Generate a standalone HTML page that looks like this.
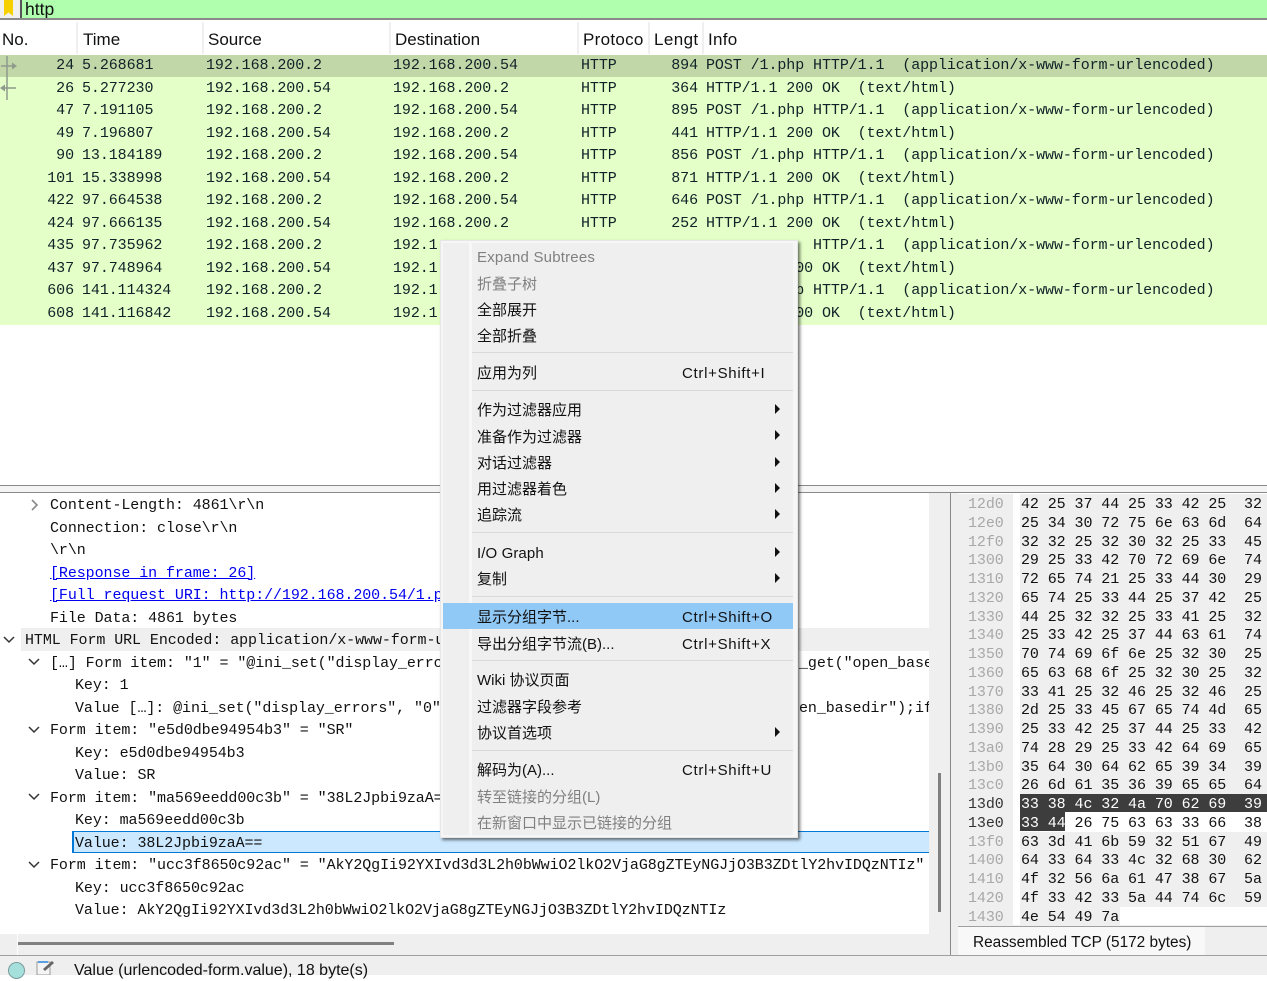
<!DOCTYPE html>
<html><head><meta charset="utf-8"><style>
html,body{margin:0;padding:0;width:1267px;height:975px;overflow:hidden;background:#fff}
*{box-sizing:border-box}
.a{position:absolute}
.m{font-family:"Liberation Mono","DejaVu Sans Mono",monospace;font-size:15px;letter-spacing:-.08px;color:#0f2228;white-space:pre}
.u{font-family:"Liberation Sans","Noto Sans CJK SC",sans-serif;font-size:15px;white-space:pre;color:#111}
#hd span{position:absolute;top:30px;font:17px/20px "Liberation Sans",sans-serif;color:#111;white-space:pre}
.dv{position:absolute;top:22px;width:2px;height:32px;background:#efefef}
.r{position:absolute;left:0;width:1267px;height:23px;background:#e4ffc7;line-height:21px}
.r span{position:absolute;top:0}
.r:nth-child(even) span{top:1px}
.n{left:0;width:74px;text-align:right}.t{left:82px}.s{left:206px}.d{left:393px}.p{left:581px}.l{left:640px;width:58px;text-align:right}.i{left:706px}
.tr{position:absolute;height:22px;line-height:21px;color:#111}
.x{position:absolute;left:968px;width:40px;color:#a8a8a8;line-height:22px}
.h{position:absolute;left:1020px;padding-left:1px;height:19px;line-height:22px;background:#efefef;color:#111;width:247px}
.off{position:absolute;left:958px;top:494px;width:55px;height:431px;background:#efefef}
.mi{position:absolute;left:477px;line-height:26px;height:22px;color:#111}
.g{color:#808080}
.sc{position:absolute;left:682px;line-height:26px;color:#111;letter-spacing:.7px}
.ar{position:absolute;left:775px;width:0;height:0;border-left:5.5px solid #111;border-top:5px solid transparent;border-bottom:5px solid transparent}
.sp{position:absolute;left:472px;width:321px;height:1px;background:#d9d9d9}
</style></head><body>

<!-- filter bar -->
<div class="a" style="left:0;top:0;width:1267px;height:18px;background:#afffaf"></div>
<div class="a" style="left:0;top:0;width:20px;height:18px;background:#f0f0f0"></div>
<svg class="a" style="left:0;top:0" width="20" height="18"><path d="M4 0H13V16L8.5 12.5L4 16Z" fill="#f6d000"/></svg>
<div class="a" style="left:20px;top:0;width:2px;height:18px;background:#555"></div>
<div class="a u" style="left:25px;top:-1px;font-size:17.5px;line-height:20px">http</div>
<div class="a" style="left:0;top:18px;width:1267px;height:2px;background:#8a8a8a"></div>

<!-- header -->
<div id="hd">
<span style="left:2px">No.</span><span style="left:83px">Time</span><span style="left:208px">Source</span><span style="left:395px">Destination</span><span style="left:583px;letter-spacing:.3px">Protoco</span><span style="left:654px;letter-spacing:.4px">Lengt</span><span style="left:708px;letter-spacing:.3px">Info</span>
</div>
<div class="dv" style="left:76px"></div><div class="dv" style="left:202px"></div><div class="dv" style="left:389px"></div><div class="dv" style="left:577px"></div><div class="dv" style="left:648px"></div><div class="dv" style="left:702px"></div>

<!-- packet list -->
<div class="a m" style="left:0;top:0">
<div class="r" style="top:54.5px;background:#c2d7a7"><span class="n">24</span><span class="t">5.268681</span><span class="s">192.168.200.2</span><span class="d">192.168.200.54</span><span class="p">HTTP</span><span class="l">894</span><span class="i">POST /1.php HTTP/1.1  (application/x-www-form-urlencoded)</span></div>
<div class="r" style="top:77px"><span class="n">26</span><span class="t">5.277230</span><span class="s">192.168.200.54</span><span class="d">192.168.200.2</span><span class="p">HTTP</span><span class="l">364</span><span class="i">HTTP/1.1 200 OK  (text/html)</span></div>
<div class="r" style="top:99.5px"><span class="n">47</span><span class="t">7.191105</span><span class="s">192.168.200.2</span><span class="d">192.168.200.54</span><span class="p">HTTP</span><span class="l">895</span><span class="i">POST /1.php HTTP/1.1  (application/x-www-form-urlencoded)</span></div>
<div class="r" style="top:122px"><span class="n">49</span><span class="t">7.196807</span><span class="s">192.168.200.54</span><span class="d">192.168.200.2</span><span class="p">HTTP</span><span class="l">441</span><span class="i">HTTP/1.1 200 OK  (text/html)</span></div>
<div class="r" style="top:144.5px"><span class="n">90</span><span class="t">13.184189</span><span class="s">192.168.200.2</span><span class="d">192.168.200.54</span><span class="p">HTTP</span><span class="l">856</span><span class="i">POST /1.php HTTP/1.1  (application/x-www-form-urlencoded)</span></div>
<div class="r" style="top:167px"><span class="n">101</span><span class="t">15.338998</span><span class="s">192.168.200.54</span><span class="d">192.168.200.2</span><span class="p">HTTP</span><span class="l">871</span><span class="i">HTTP/1.1 200 OK  (text/html)</span></div>
<div class="r" style="top:189.5px"><span class="n">422</span><span class="t">97.664538</span><span class="s">192.168.200.2</span><span class="d">192.168.200.54</span><span class="p">HTTP</span><span class="l">646</span><span class="i">POST /1.php HTTP/1.1  (application/x-www-form-urlencoded)</span></div>
<div class="r" style="top:212px"><span class="n">424</span><span class="t">97.666135</span><span class="s">192.168.200.54</span><span class="d">192.168.200.2</span><span class="p">HTTP</span><span class="l">252</span><span class="i">HTTP/1.1 200 OK  (text/html)</span></div>
<div class="r" style="top:234.5px"><span class="n">435</span><span class="t">97.735962</span><span class="s">192.168.200.2</span><span class="d">192.1</span><span class="i">            HTTP/1.1  (application/x-www-form-urlencoded)</span></div>
<div class="r" style="top:257px"><span class="n">437</span><span class="t">97.748964</span><span class="s">192.168.200.54</span><span class="d">192.1</span><span class="i">HTTP/1.1 200 OK  (text/html)</span></div>
<div class="r" style="top:279.5px"><span class="n">606</span><span class="t">141.114324</span><span class="s">192.168.200.2</span><span class="d">192.1</span><span class="i">POST /1.php HTTP/1.1  (application/x-www-form-urlencoded)</span></div>
<div class="r" style="top:302px"><span class="n">608</span><span class="t">141.116842</span><span class="s">192.168.200.54</span><span class="d">192.1</span><span class="i">HTTP/1.1 200 OK  (text/html)</span></div>
</div>
<svg class="a" style="left:0;top:55px" width="22" height="46"><path d="M7 1V45" stroke="#8e9a8e" stroke-width="1.5"/><path d="M1 11H13" stroke="#8e9a8e" stroke-width="1.5"/><path d="M12 7.5L17 11L12 14.5Z" fill="#8e9a8e"/><path d="M4 33H16" stroke="#8e9a8e" stroke-width="1.5"/><path d="M5 29.5L0 33L5 36.5Z" fill="#8e9a8e"/></svg>

<!-- separators -->
<div class="a" style="left:0;top:485px;width:1267px;height:1px;background:#8a8a8a"></div>
<div class="a" style="left:0;top:492px;width:1267px;height:1px;background:#8a8a8a"></div>
<div class="a" style="left:0;top:486px;width:1267px;height:6px;background:#f4f4f4"></div>

<!-- tree pane -->
<div class="a" style="left:0;top:493px;width:951px;height:462px;background:#efefef;border-right:1px solid #8a8a8a"></div>
<div class="a" style="left:0;top:493px;width:929px;height:441px;background:#fff"></div>
<div class="a" style="left:21px;top:628px;width:908px;height:23px;background:#efefef"></div>
<div class="a" style="left:72px;top:831px;width:857px;height:22px;background:#cce8ff;border-top:1px solid #0078d7;border-bottom:1px solid #0078d7;border-left:2px solid #0078d7"></div>

<div class="a m" style="left:0;top:1px;width:929px;height:933px;overflow:hidden">
<div class="tr" style="left:50px;top:494px">Content-Length: 4861\r\n</div>
<div class="tr" style="left:50px;top:517px">Connection: close\r\n</div>
<div class="tr" style="left:50px;top:539px">\r\n</div>
<div class="tr" style="left:50px;top:562px;color:#0000ee;text-decoration:underline">[Response in frame: 26]</div>
<div class="tr" style="left:50px;top:584px;color:#0000ee;text-decoration:underline">[Full request URI: http://192.168.200.54/1.php]</div>
<div class="tr" style="left:50px;top:607px">File Data: 4861 bytes</div>
<div class="tr" style="left:25px;top:629px">HTML Form URL Encoded: application/x-www-form-urlencoded</div>
<div class="tr" style="left:50px;top:652px">[…] Form item: "1" = "@ini_set("display_errors", "0");</div>
<div class="tr" style="left:799px;top:652px">_get("open_base</div>
<div class="tr" style="left:75px;top:674px">Key: 1</div>
<div class="tr" style="left:75px;top:697px">Value […]: @ini_set("display_errors", "0");</div>
<div class="tr" style="left:799px;top:697px">en_basedir");if</div>
<div class="tr" style="left:50px;top:719px">Form item: "e5d0dbe94954b3" = "SR"</div>
<div class="tr" style="left:75px;top:742px">Key: e5d0dbe94954b3</div>
<div class="tr" style="left:75px;top:764px">Value: SR</div>
<div class="tr" style="left:50px;top:787px">Form item: "ma569eedd00c3b" = "38L2Jpbi9zaA=="</div>
<div class="tr" style="left:75px;top:809px">Key: ma569eedd00c3b</div>
<div class="tr" style="left:75px;top:832px">Value: 38L2Jpbi9zaA==</div>
<div class="tr" style="left:50px;top:854px">Form item: "ucc3f8650c92ac" = "AkY2QgIi92YXIvd3d3L2h0bWwiO2lkO2VjaG8gZTEyNGJjO3B3ZDtlY2hvIDQzNTIz"</div>
<div class="tr" style="left:75px;top:877px">Key: ucc3f8650c92ac</div>
<div class="tr" style="left:75px;top:899px">Value: AkY2QgIi92YXIvd3d3L2h0bWwiO2lkO2VjaG8gZTEyNGJjO3B3ZDtlY2hvIDQzNTIz</div>
</div>

<svg class="a" style="left:0;top:493px" width="50" height="400" fill="none">
<path d="M32 7L37 12L32 17" stroke="#8a8a8a" stroke-width="1.6"/>
<g stroke="#333" stroke-width="1.5">
<path d="M4 144L9 149L14 144"/><path d="M29 166L34 171L39 166"/><path d="M29 234L34 239L39 234"/><path d="M29 301L34 306L39 301"/><path d="M29 369L34 374L39 369"/>
</g></svg>

<!-- scrollbars -->
<div class="a" style="left:938px;top:773px;width:3px;height:139px;background:#808080"></div>
<div class="a" style="left:18px;top:942px;width:376px;height:3px;background:#808080"></div>
<div class="a" style="left:17px;top:934px;width:1px;height:21px;background:#fff"></div>

<!-- hex pane -->
<div class="a" style="left:951px;top:493px;width:316px;height:462px;background:#efefef"></div>
<div class="a" style="left:958px;top:493px;width:309px;height:432px;background:#fff"></div>
<div class="off"></div>
<div class="a" style="left:1020px;top:793px;width:247px;height:19px;background:#3d3d3d"></div>
<div class="a" style="left:1020px;top:812px;width:45px;height:19px;background:#3d3d3d"></div>
<div class="a m" style="left:0;top:0">
<div class="x" style="top:494px">12d0</div><div class="h" style="top:494px">42 25 37 44 25 33 42 25  32</div>
<div class="x" style="top:513px">12e0</div><div class="h" style="top:513px">25 34 30 72 75 6e 63 6d  64</div>
<div class="x" style="top:532px">12f0</div><div class="h" style="top:532px">32 32 25 32 30 32 25 33  45</div>
<div class="x" style="top:550px">1300</div><div class="h" style="top:550px">29 25 33 42 70 72 69 6e  74</div>
<div class="x" style="top:569px">1310</div><div class="h" style="top:569px">72 65 74 21 25 33 44 30  29</div>
<div class="x" style="top:588px">1320</div><div class="h" style="top:588px">65 74 25 33 44 25 37 42  25</div>
<div class="x" style="top:607px">1330</div><div class="h" style="top:607px">44 25 32 32 25 33 41 25  32</div>
<div class="x" style="top:625px">1340</div><div class="h" style="top:625px">25 33 42 25 37 44 63 61  74</div>
<div class="x" style="top:644px">1350</div><div class="h" style="top:644px">70 74 69 6f 6e 25 32 30  25</div>
<div class="x" style="top:663px">1360</div><div class="h" style="top:663px">65 63 68 6f 25 32 30 25  32</div>
<div class="x" style="top:682px">1370</div><div class="h" style="top:682px">33 41 25 32 46 25 32 46  25</div>
<div class="x" style="top:700px">1380</div><div class="h" style="top:700px">2d 25 33 45 67 65 74 4d  65</div>
<div class="x" style="top:719px">1390</div><div class="h" style="top:719px">25 33 42 25 37 44 25 33  42</div>
<div class="x" style="top:738px">13a0</div><div class="h" style="top:738px">74 28 29 25 33 42 64 69  65</div>
<div class="x" style="top:757px">13b0</div><div class="h" style="top:757px">35 64 30 64 62 65 39 34  39</div>
<div class="x" style="top:775px">13c0</div><div class="h" style="top:775px">26 6d 61 35 36 39 65 65  64</div>
<div class="x" style="top:794px;color:#333">13d0</div><div class="h" style="top:794px;background:none;color:#fff">33 38 4c 32 4a 70 62 69  39</div>
<div class="x" style="top:813px;color:#333">13e0</div><div class="h" style="top:813px;background:none"><span style="color:#fff">33 44</span> 26 75 63 63 33 66  38</div>
<div class="x" style="top:832px">13f0</div><div class="h" style="top:832px;background:#efefef">63 3d 41 6b 59 32 51 67  49</div>
<div class="x" style="top:850px">1400</div><div class="h" style="top:850px">64 33 64 33 4c 32 68 30  62</div>
<div class="x" style="top:869px">1410</div><div class="h" style="top:869px">4f 32 56 6a 61 47 38 67  5a</div>
<div class="x" style="top:888px">1420</div><div class="h" style="top:888px">4f 33 42 33 5a 44 74 6c  59</div>
<div class="x" style="top:907px">1430</div><div class="h" style="top:907px;width:100px">4e 54 49 7a</div>
</div>
<div class="a" style="left:958px;top:926px;width:309px;height:1px;background:#a0a0a0"></div>
<div class="a u" style="left:958px;top:927px;width:247px;height:28px;background:#f8f8f8;padding-left:15px;line-height:31px;font-size:15.4px">Reassembled TCP (5172 bytes)</div>

<!-- status bar -->
<div class="a" style="left:0;top:955px;width:1267px;height:20px;background:#efefef;border-top:1px solid #a0a0a0"></div>
<div class="a" style="left:8px;top:962px;width:17px;height:17px;border-radius:50%;background:#a5e0dc;border:1px solid #7a9a9a"></div>
<svg class="a" style="left:36px;top:960px" width="20" height="15"><path d="M1 2H14V15H1Z" fill="#f4f4f4" stroke="#9a9a9a"/><path d="M7 9L16 1L18 3L9 11Z" fill="#666"/><path d="M2 1H12V3H2Z" fill="#5aa0e0"/></svg>
<div class="a u" style="left:74px;top:961px;line-height:20px;font-size:16px">Value (urlencoded-form.value), 18 byte(s)</div>

<!-- context menu -->
<div class="a" style="left:440px;top:240px;width:358px;height:598px;background:#f6f6f6;border:1px solid #e6e6e6;box-shadow:2px 2px 3px rgba(0,0,0,.55)"></div>
<div class="a" style="left:443px;top:243px;width:350px;height:592px;background:#efefef"></div>
<div class="a" style="left:469px;top:243px;width:3px;height:592px;background:#f7f7f7"></div>
<div class="a" style="left:443px;top:603px;width:350px;height:26px;background:#90c8f6"></div>

<div class="u">
<div class="mi g" style="top:245px;letter-spacing:.2px">Expand Subtrees</div>
<div class="mi g" style="top:272px">折叠子树</div>
<div class="mi" style="top:298px">全部展开</div>
<div class="mi" style="top:324px">全部折叠</div>
<div class="sp" style="top:352px"></div>
<div class="mi" style="top:361px">应用为列</div><div class="sc" style="top:361px">Ctrl+Shift+I</div>
<div class="sp" style="top:390px"></div>
<div class="mi" style="top:398px">作为过滤器应用</div><div class="ar" style="top:404px"></div>
<div class="mi" style="top:425px">准备作为过滤器</div><div class="ar" style="top:430px"></div>
<div class="mi" style="top:451px">对话过滤器</div><div class="ar" style="top:457px"></div>
<div class="mi" style="top:477px">用过滤器着色</div><div class="ar" style="top:483px"></div>
<div class="mi" style="top:503px">追踪流</div><div class="ar" style="top:509px"></div>
<div class="sp" style="top:532px"></div>
<div class="mi" style="top:541px;letter-spacing:.1px">I/O Graph</div><div class="ar" style="top:547px"></div>
<div class="mi" style="top:567px">复制</div><div class="ar" style="top:573px"></div>
<div class="sp" style="top:596px"></div>
<div class="mi" style="top:605px">显示分组字节...</div><div class="sc" style="top:605px">Ctrl+Shift+O</div>
<div class="mi" style="top:632px">导出分组字节流(B)...</div><div class="sc" style="top:632px">Ctrl+Shift+X</div>
<div class="sp" style="top:660px"></div>
<div class="mi" style="top:668px">Wiki 协议页面</div>
<div class="mi" style="top:695px">过滤器字段参考</div>
<div class="mi" style="top:721px">协议首选项</div><div class="ar" style="top:727px"></div>
<div class="sp" style="top:750px"></div>
<div class="mi" style="top:758px">解码为(A)...</div><div class="sc" style="top:758px">Ctrl+Shift+U</div>
<div class="mi g" style="top:785px">转至链接的分组(L)</div>
<div class="mi g" style="top:811px">在新窗口中显示已链接的分组</div>
</div>
</body></html>
